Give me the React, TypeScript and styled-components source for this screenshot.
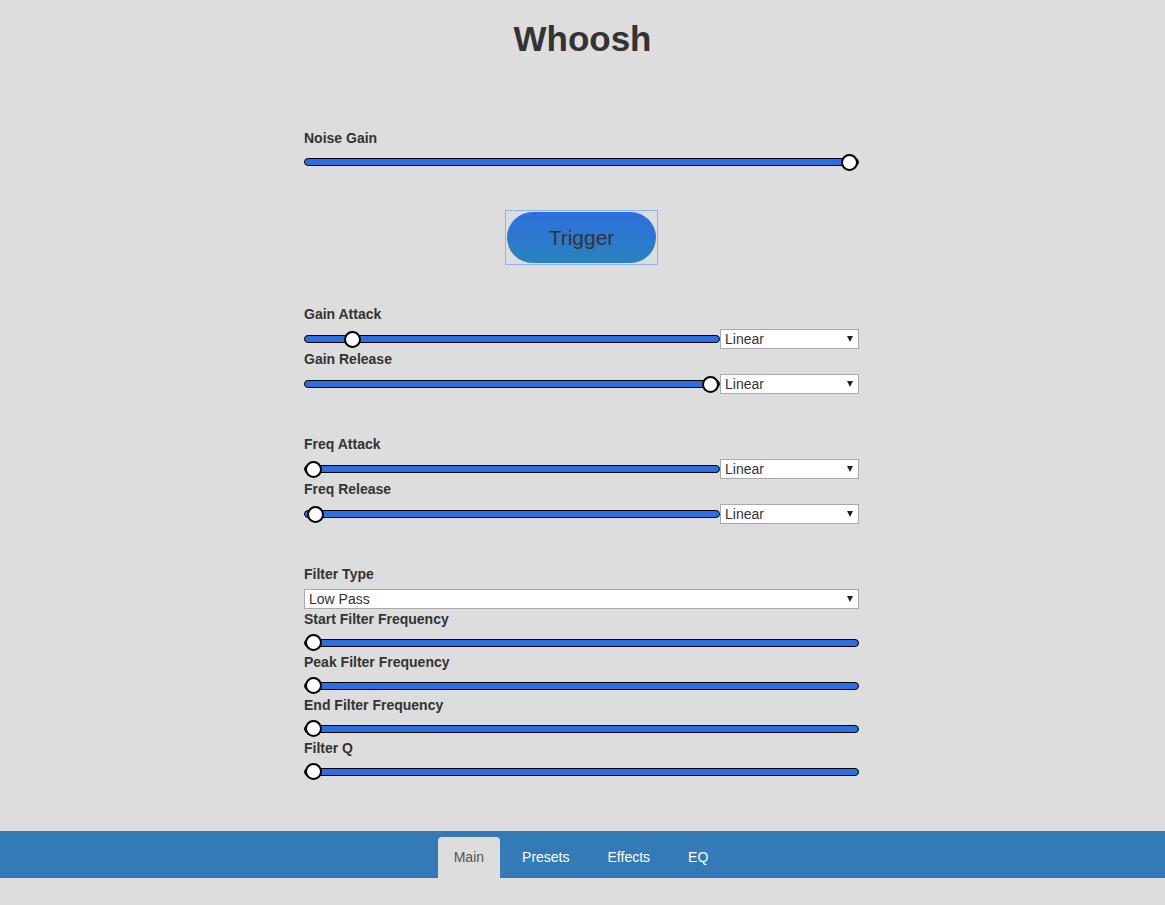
import React from "react";
import styled, { createGlobalStyle } from "styled-components";

const GlobalStyle = createGlobalStyle`
  html, body { margin: 0; padding: 0; }
  body {
    background: #dddddd;
    font-family: "Liberation Sans", Arial, sans-serif;
    color: #333333;
  }
  * { box-sizing: border-box; }
`;

const Title = styled.h1`
  margin: 0;
  padding-top: 19px;
  font-size: 35px;
  line-height: 40px;
  font-weight: 700;
  text-align: center;
  color: #333333;
`;

const Panel = styled.main`
  width: 555px;
  margin: 69px 0 0 calc(50% - 278.5px);
  display: flex;
  flex-direction: column;
`;

const Section = styled.section<{ $top: number }>`
  margin-top: ${(p) => p.$top}px;
  display: flex;
  flex-direction: column;
`;

const Label = styled.label`
  display: block;
  font-size: 14px;
  font-weight: 700;
  line-height: 20px;
  color: #333333;
`;

const Row = styled.div<{ $pad: number; $h: number }>`
  display: flex;
  align-items: center;
  height: ${(p) => p.$pad + p.$h}px;
  padding-top: ${(p) => p.$pad}px;
`;

const Range = styled.input.attrs({ type: "range" })`
  -webkit-appearance: none;
  appearance: none;
  flex: 1;
  min-width: 0;
  height: 20px;
  margin: 0;
  padding: 0;
  background: transparent;
  outline: none;

  &::-webkit-slider-runnable-track {
    height: 8px;
    box-sizing: border-box;
    border: 1px solid #000;
    border-radius: 4px;
    background: #2d6fe0;
  }
  &::-webkit-slider-thumb {
    -webkit-appearance: none;
    appearance: none;
    box-sizing: border-box;
    width: 17px;
    height: 17px;
    margin-top: -5.5px;
    border-radius: 50%;
    border: 2px solid #000;
    background: #ffffff;
  }
`;

const SelectBox = styled.div<{ $width?: number }>`
  position: relative;
  flex: ${(p) => (p.$width ? `0 0 ${p.$width}px` : "1")};
  height: 20px;

  &::after {
    content: "";
    position: absolute;
    right: 6px;
    top: 7px;
    border-left: 3.5px solid transparent;
    border-right: 3.5px solid transparent;
    border-top: 6px solid #222;
    pointer-events: none;
  }
`;

const Select = styled.select`
  -webkit-appearance: none;
  appearance: none;
  width: 100%;
  height: 20px;
  margin: 0;
  padding: 0 0 0 4px;
  border: 1px solid #a9a9a9;
  border-radius: 0;
  background: #ffffff;
  font-family: "Liberation Sans", Arial, sans-serif;
  font-size: 14px;
  color: #333333;
  outline: none;
`;

const TriggerWrap = styled.div`
  align-self: center;
  margin-top: 38px;
  padding: 1px;
  border: 1px solid #8fb3f2;
  display: flex;
`;

const TriggerButton = styled.button`
  width: 149px;
  height: 51px;
  border: none;
  border-radius: 26px;
  background: linear-gradient(#2e6fe0, #2a82bd);
  font-family: "Liberation Sans", Arial, sans-serif;
  font-size: 21px;
  color: #333333;
  padding: 0;
  cursor: pointer;
`;

const Footer = styled.footer`
  margin-top: 50px;
  height: 47px;
  background: #337ab7;
  display: flex;
  justify-content: center;
  align-items: flex-end;
`;

const Tabs = styled.nav`
  display: flex;
  gap: 6px;
  height: 41px;
  margin-left: -3px;
`;

const Tab = styled.a<{ $active?: boolean }>`
  display: flex;
  align-items: center;
  padding: 0 15px 3px;
  height: 41px;
  font-size: 14px;
  text-decoration: none;
  border-radius: 4px 4px 0 0;
  color: ${(p) => (p.$active ? "#555555" : "#ffffff")};
  background: ${(p) => (p.$active ? "#dddddd" : "transparent")};
  border: 1px solid ${(p) => (p.$active ? "#dddddd" : "transparent")};
  border-bottom: none;
`;

const noop = () => {};

function SliderField({
  label,
  value,
  pad = 5,
  h = 20,
}: {
  label: string;
  value: number;
  pad?: number;
  h?: number;
}) {
  return (
    <>
      <Label>{label}</Label>
      <Row $pad={pad} $h={h}>
        <Range min={0} max={1000} value={value} onChange={noop} />
      </Row>
    </>
  );
}

function CurveField({ label, value }: { label: string; value: number }) {
  return (
    <>
      <Label>{label}</Label>
      <Row $pad={5} $h={20}>
        <Range min={0} max={1000} value={value} onChange={noop} />
        <SelectBox $width={139}>
          <Select value="linear" onChange={noop}>
            <option value="linear">Linear</option>
            <option value="exponential">Exponential</option>
          </Select>
        </SelectBox>
      </Row>
    </>
  );
}

export default function App() {
  return (
    <>
      <GlobalStyle />
      <Title>Whoosh</Title>
      <Panel>
        <Section $top={0}>
          <SliderField label="Noise Gain" value={1000} pad={4} />
        </Section>
        <TriggerWrap>
          <TriggerButton>Trigger</TriggerButton>
        </TriggerWrap>
        <Section $top={39}>
          <CurveField label="Gain Attack" value={99} />
          <CurveField label="Gain Release" value={1000} />
        </Section>
        <Section $top={40}>
          <CurveField label="Freq Attack" value={0} />
          <CurveField label="Freq Release" value={6} />
        </Section>
        <Section $top={40}>
          <Label>Filter Type</Label>
          <Row $pad={5} $h={20}>
            <SelectBox>
              <Select value="lowpass" onChange={noop}>
                <option value="lowpass">Low Pass</option>
                <option value="highpass">High Pass</option>
                <option value="bandpass">Band Pass</option>
              </Select>
            </SelectBox>
          </Row>
          <SliderField label="Start Filter Frequency" value={0} pad={4} h={19} />
          <SliderField label="Peak Filter Frequency" value={0} pad={4} h={19} />
          <SliderField label="End Filter Frequency" value={0} pad={4} h={19} />
          <SliderField label="Filter Q" value={0} pad={4} h={19} />
        </Section>
      </Panel>
      <Footer>
        <Tabs>
          <Tab href="#" $active>Main</Tab>
          <Tab href="#">Presets</Tab>
          <Tab href="#">Effects</Tab>
          <Tab href="#">EQ</Tab>
        </Tabs>
      </Footer>
    </>
  );
}
